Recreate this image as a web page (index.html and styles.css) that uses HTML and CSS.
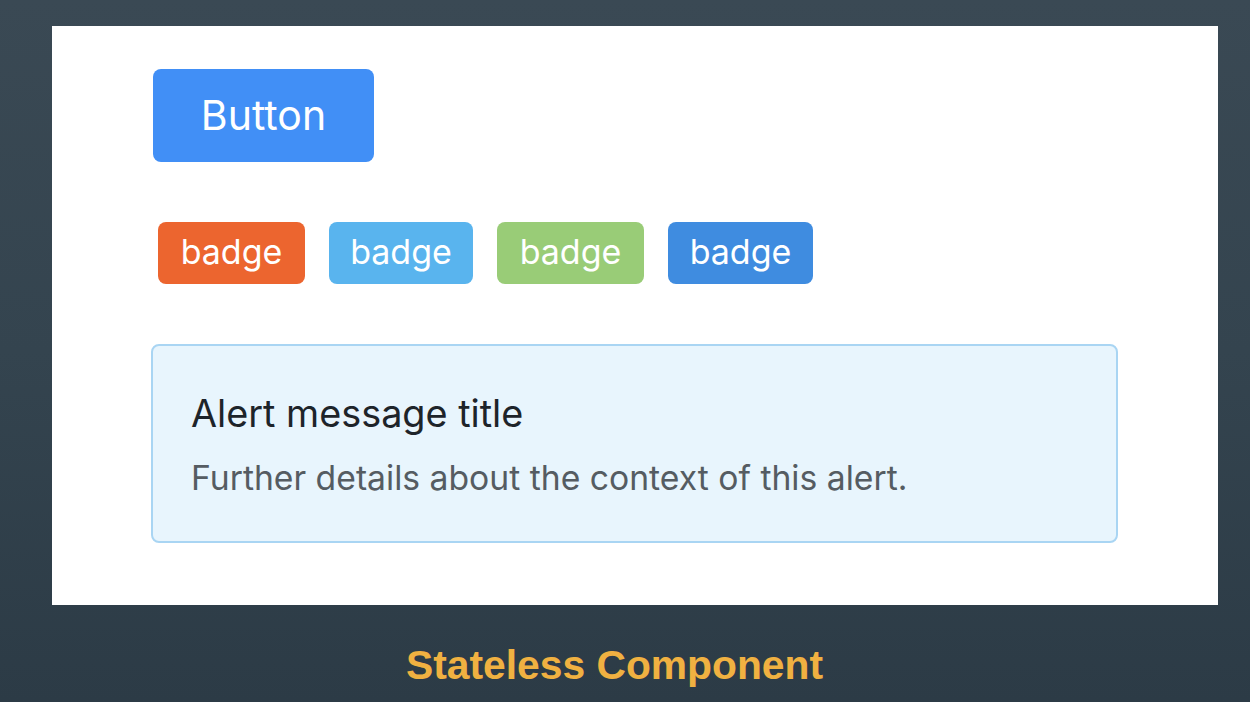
FILE: index.html
```html
<!DOCTYPE html>
<html lang="en">
<head>
<meta charset="utf-8">
<title>Stateless Component</title>
<link rel="stylesheet" href="styles.css">
</head>
<body>
<main class="stage">
  <section class="panel">
    <button class="btn" type="button">Button</button>
    <div class="badges">
      <span class="badge badge-orange">badge</span>
      <span class="badge badge-sky">badge</span>
      <span class="badge badge-green">badge</span>
      <span class="badge badge-blue">badge</span>
    </div>
    <div class="alert">
      <h2 class="alert-title">Alert message title</h2>
      <p class="alert-text">Further details about the context of this alert.</p>
    </div>
  </section>
  <h1 class="caption">Stateless Component</h1>
</main>
</body>
</html>
```

FILE: styles.css
```css
html, body {
  margin: 0;
  padding: 0;
}
body {
  width: 1250px;
  height: 702px;
  overflow: hidden;
  background: linear-gradient(180deg, #3a4954 0%, #34444f 50%, #2c3b46 100%);
  font-family: Inter, "Noto Sans", sans-serif;
}
.stage {
  display: flex;
  flex-direction: column;
  padding: 26px 32px 0 52px;
}
.panel {
  box-sizing: border-box;
  width: 1166px;
  height: 579px;
  background: #ffffff;
  display: flex;
  flex-direction: column;
  align-items: flex-start;
  padding: 43px 0 0 99px;
}
.btn {
  box-sizing: border-box;
  width: 221px;
  height: 93px;
  margin-left: 2px;
  border: none;
  border-radius: 8px;
  background: #418ff6;
  color: #ffffff;
  font-family: Inter, "Noto Sans", sans-serif;
  font-size: 41px;
  font-weight: 400;
  padding: 0 0 1px;
}
.badges {
  display: flex;
  gap: 24px;
  margin-top: 60px;
  margin-left: 7px;
}
.badge {
  box-sizing: border-box;
  height: 62px;
  border-radius: 8px;
  display: flex;
  align-items: center;
  justify-content: center;
  color: #ffffff;
  font-size: 34px;
  line-height: 1;
  padding-bottom: 2px;
}
.badge-orange { background: #ec652f; width: 147px; }
.badge-sky { background: #59b4ee; width: 144px; }
.badge-green { background: #99cc77; width: 147px; }
.badge-blue { background: #3f8ce0; width: 145px; }
.alert {
  box-sizing: border-box;
  width: 967px;
  height: 199px;
  margin-top: 60px;
  border: 2px solid #a9d5f3;
  border-radius: 8px;
  background: #e8f5fd;
  padding: 44px 38px 0 38px;
}
.alert-title {
  margin: 0;
  font-size: 37.8px;
  font-weight: 400;
  line-height: 46px;
  color: #1d242a;
}
.alert-text {
  margin: 21px 0 0;
  font-size: 33.7px;
  line-height: 42px;
  color: #555c62;
}
.caption {
  margin: 38px 0 0;
  padding-right: 41px;
  text-align: center;
  font-family: "Liberation Sans", Arial, sans-serif;
  font-weight: 700;
  font-size: 40.8px;
  line-height: 44px;
  color: #f0b141;
}
```
